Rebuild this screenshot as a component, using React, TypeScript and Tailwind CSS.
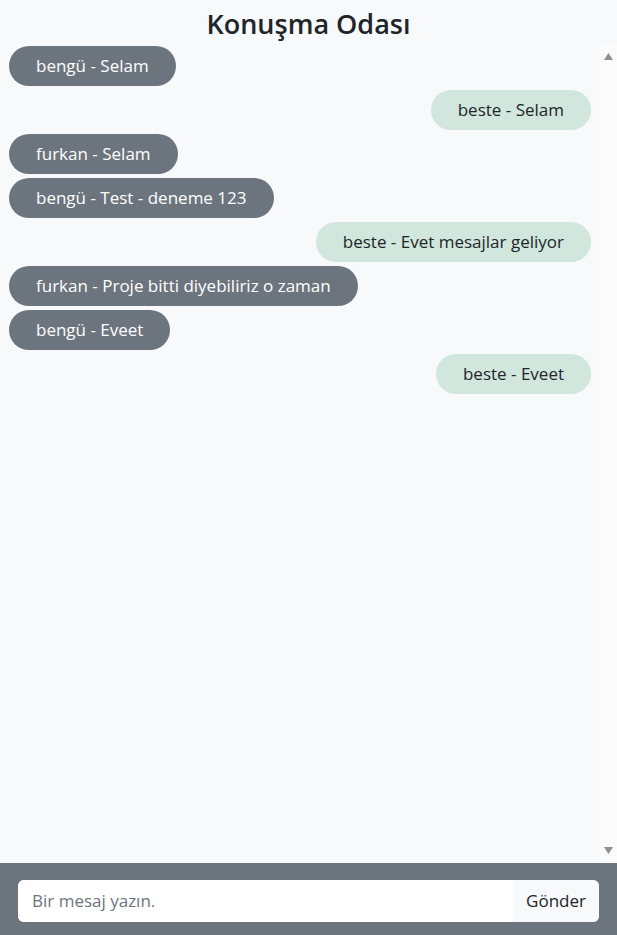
import React from "react";

const messages: { user: string; text: string; mine: boolean }[] = [
  { user: "bengü", text: "Selam", mine: false },
  { user: "beste", text: "Selam", mine: true },
  { user: "furkan", text: "Selam", mine: false },
  { user: "bengü", text: "Test - deneme 123", mine: false },
  { user: "beste", text: "Evet mesajlar geliyor", mine: true },
  { user: "furkan", text: "Proje bitti diyebiliriz o zaman", mine: false },
  { user: "bengü", text: "Eveet", mine: false },
  { user: "beste", text: "Eveet", mine: true },
];

export default function App() {
  return (
    <div
      className="flex h-screen flex-col bg-[#f8f9fa] text-[#212529]"
      style={{ fontFamily: '"Open Sans", "Noto Sans", sans-serif' }}
    >
      <h3 className="m-0 flex h-[44px] shrink-0 items-center justify-center pt-[2px] text-[27px] font-semibold leading-none">
        Konuşma Odası
      </h3>
      <div className="flex min-h-0 flex-1">
        <div className="flex flex-1 flex-col gap-[4px] overflow-hidden px-[9px] pt-[2px]">
          {messages.map((m, i) => (
            <div key={i} className={m.mine ? "flex justify-end" : "flex justify-start"}>
              <div
                className={
                  m.mine
                    ? "rounded-full bg-[#d1e7dd] px-[27px] py-[8px] text-[17px] leading-[24px] text-[#212529]"
                    : "rounded-full bg-[#6c757d] px-[27px] py-[8px] text-[17px] leading-[24px] text-white"
                }
              >
                {m.user} - {m.text}
              </div>
            </div>
          ))}
        </div>
        <div className="flex w-[17px] shrink-0 flex-col items-center justify-between bg-[#fbfbfb] pb-[9px] pt-[9px]">
          <svg width="9" height="7" viewBox="0 0 9 7">
            <polygon points="4.5,0 9,7 0,7" fill="#8f8f8f" />
          </svg>
          <svg width="9" height="7" viewBox="0 0 9 7">
            <polygon points="0,0 9,0 4.5,7" fill="#8f8f8f" />
          </svg>
        </div>
      </div>
      <div className="shrink-0 bg-[#6c757d] px-[18px] pb-[13px] pt-[17px]">
        <div className="flex h-[42px] overflow-hidden rounded-[6px] bg-white">
          <input
            className="min-w-0 flex-1 bg-white px-[14px] text-[17px] text-[#212529] outline-none placeholder:text-[#6c757d]"
            placeholder="Bir mesaj yazın."
          />
          <button className="shrink-0 bg-[#f8f9fa] px-[13px] text-[17px] text-[#212529]">Gönder</button>
        </div>
      </div>
    </div>
  );
}
